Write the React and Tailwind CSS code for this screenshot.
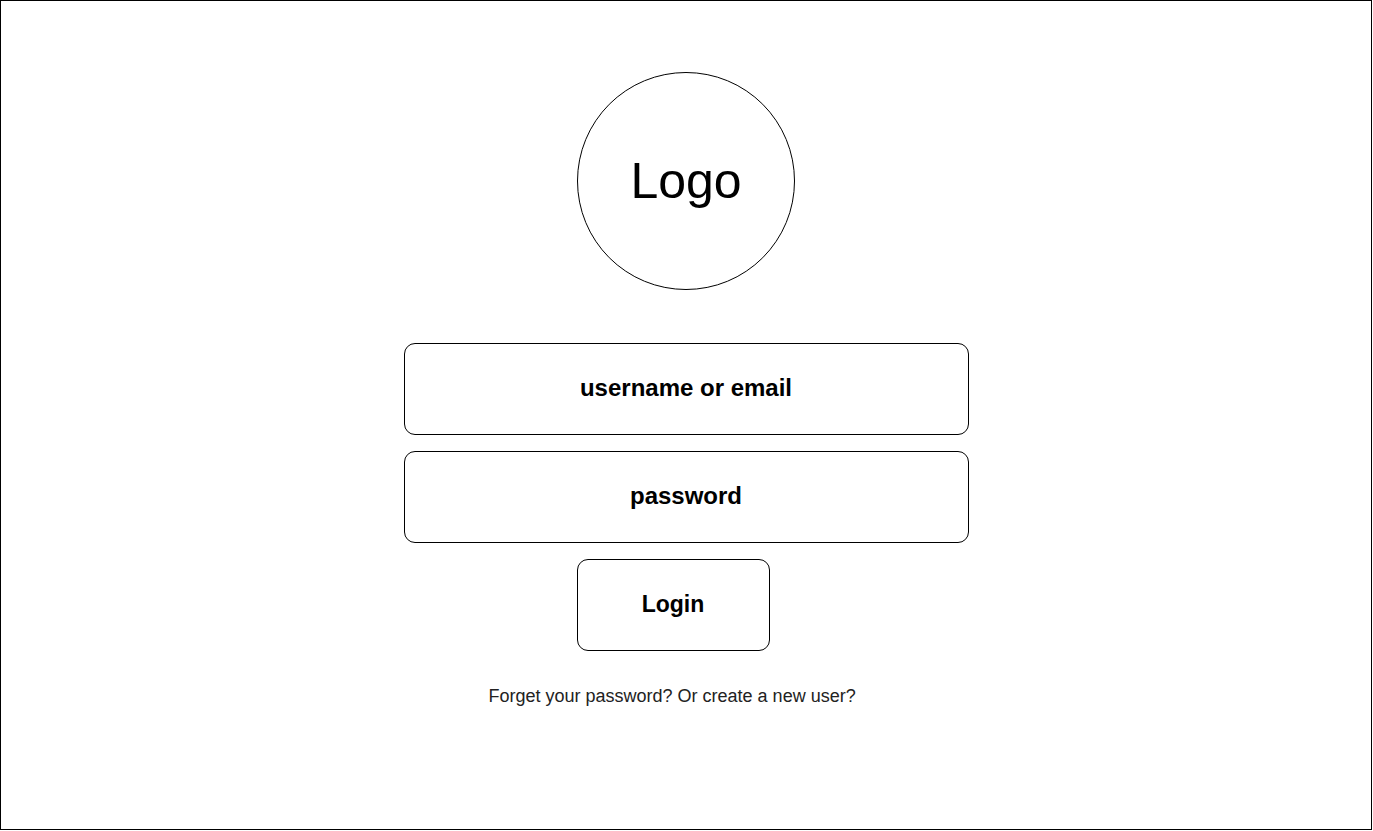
import React from "react";

const App = () => {
  return (
    <div className="w-[1373px] h-[831px] bg-white" style={{ fontFamily: "'Liberation Sans', Arial, sans-serif" }}>
      <div className="w-[1372px] h-[830px] border border-black flex flex-col items-center pt-[71px]">
        {/* logo */}
        <div className="w-[218px] h-[218px] rounded-full border border-black flex items-center justify-center">
          <span className="text-[50px] text-black leading-none">Logo</span>
        </div>

        <div className="w-[565px] mt-[53px] flex flex-col">
          <div className="h-[92px] pb-[2px] rounded-[11px] border border-black flex items-center justify-center">
            <span className="text-[24px] font-bold text-black">username or email</span>
          </div>
          <div className="h-[92px] pb-[2px] mt-[16px] rounded-[11px] border border-black flex items-center justify-center">
            <span className="text-[24px] font-bold text-black">password</span>
          </div>

          <button className="w-[193px] h-[92px] pb-[2px] mt-[16px] ml-[173px] rounded-[11px] border border-black flex items-center justify-center">
            <span className="text-[23px] font-bold text-black">Login</span>
          </button>

          <p className="mt-[32px] ml-[85px] text-[18px] text-[#222]">
            Forget your password? Or create a new user?
          </p>
        </div>
      </div>
    </div>
  );
};

export default App;
